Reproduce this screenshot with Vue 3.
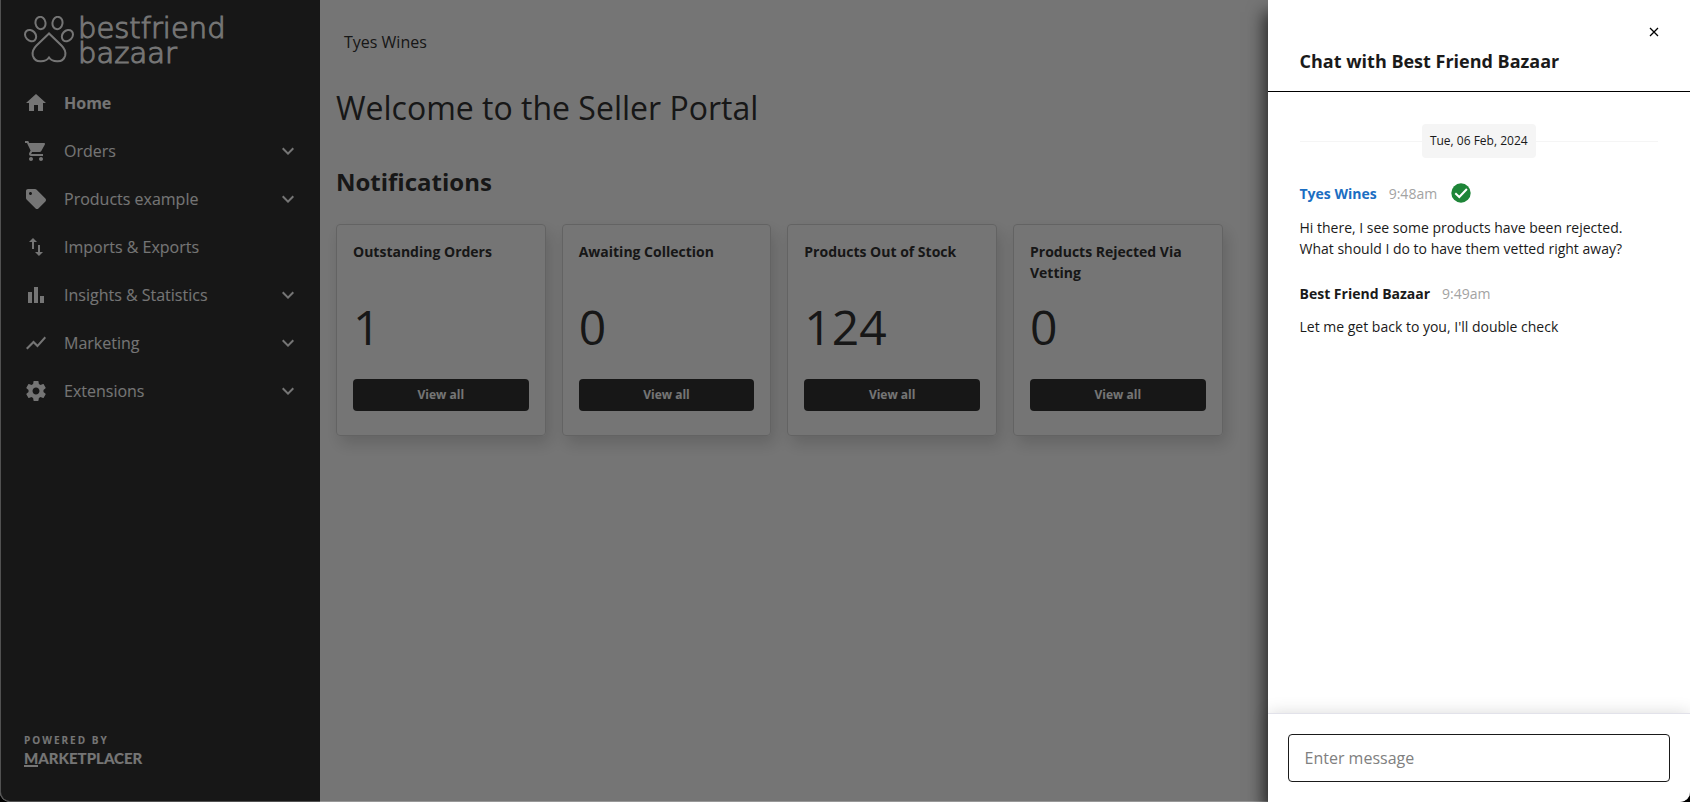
<template>
  <div class="window">
    <div class="portal">
      <!-- Sidebar -->
      <aside class="sidebar">
        <a class="brand" href="#" aria-label="bestfriend bazaar">
          <svg class="brand-paw" viewBox="0 0 50 47" aria-hidden="true">
            <ellipse cx="16.5" cy="7" rx="5" ry="6.2" transform="rotate(-10 16.5 7)" />
            <ellipse cx="33.5" cy="7" rx="5" ry="6.2" transform="rotate(10 33.5 7)" />
            <ellipse cx="6.6" cy="19.6" rx="5" ry="6.2" transform="rotate(-42 6.6 19.6)" />
            <ellipse cx="43.4" cy="19.6" rx="5" ry="6.2" transform="rotate(42 43.4 19.6)" />
            <path d="M25 17.5L12.5 29.5C9 33 8 36 8.8 39.5C10 44 13.5 45.5 17 45.3C20 45.2 23 44.5 25 41.5C27 44.5 30 45.2 33 45.3C36.5 45.5 40 44 41.2 39.5C42 36 41 33 37.5 29.5Z" />
          </svg>
          <span class="brand-name">
            <span>bestfriend</span>
            <span>bazaar</span>
          </span>
        </a>

        <nav class="menu">
          <a
            v-for="item in menu"
            :key="item.label"
            href="#"
            class="menu-item"
            :class="{ active: item.active }"
          >
            <svg class="icon" viewBox="0 0 24 24" aria-hidden="true"><path :d="item.icon" /></svg>
            <span class="menu-label">{{ item.label }}</span>
            <svg v-if="item.children" class="icon" viewBox="0 0 24 24" aria-hidden="true">
              <path d="M16.59 8.59L12 13.17 7.41 8.59 6 10l6 6 6-6z" />
            </svg>
          </a>
        </nav>

        <div class="powered">
          <span class="powered-by">POWERED BY</span>
          <span class="powered-name"><span class="powered-m">M</span>ARKETPLACER</span>
        </div>
      </aside>

      <!-- Main content -->
      <main class="main">
        <div class="seller">Tyes Wines</div>
        <h1>Welcome to the Seller Portal</h1>
        <h2>Notifications</h2>
        <div class="cards">
          <section v-for="card in cards" :key="card.title" class="card">
            <h3>{{ card.title }}</h3>
            <div class="count">{{ card.count }}</div>
            <button type="button" class="view-all">View all</button>
          </section>
        </div>
      </main>
    </div>

    <div class="backdrop"></div>

    <!-- Chat drawer -->
    <aside class="drawer">
      <header class="drawer-header">
        <button type="button" class="close" aria-label="Close" @click="draft = ''">
          <svg viewBox="0 0 10 10" aria-hidden="true"><path d="M1 1l8 8M9 1l-8 8" /></svg>
        </button>
        <h2>Chat with Best Friend Bazaar</h2>
      </header>

      <div class="thread">
        <div class="day"><span>Tue, 06 Feb, 2024</span></div>
        <article v-for="msg in messages" :key="msg.time" class="message">
          <div class="meta">
            <span class="author" :class="{ own: msg.own }">{{ msg.author }}</span>
            <time>{{ msg.time }}</time>
            <svg v-if="msg.own" class="sent" viewBox="0 0 24 24" aria-hidden="true">
              <circle cx="12" cy="12" r="9.7" />
              <path d="M6.3 12.2l4 3.8 7.6-8" />
            </svg>
          </div>
          <p>{{ msg.text }}</p>
        </article>
      </div>

      <form class="composer" @submit.prevent>
        <input v-model="draft" type="text" placeholder="Enter message" aria-label="Enter message" />
      </form>
    </aside>
  </div>
</template>

<script setup>
import { ref } from "vue"

const draft = ref("")

const menu = [
  { label: "Home", active: true, icon: "M10 20v-6h4v6h5v-8h3L12 3 2 12h3v8z" },
  {
    label: "Orders",
    children: true,
    icon: "M7 18c-1.1 0-1.99.9-1.99 2S5.9 22 7 22s2-.9 2-2-.9-2-2-2zM1 2v2h2l3.6 7.59-1.35 2.45c-.16.28-.25.61-.25.96 0 1.1.9 2 2 2h12v-2H7.42c-.14 0-.25-.11-.25-.25l.03-.12.9-1.63h7.45c.75 0 1.41-.41 1.75-1.03l3.58-6.49c.08-.14.12-.31.12-.48 0-.55-.45-1-1-1H5.21l-.94-2H1zm16 16c-1.1 0-1.99.9-1.99 2s.89 2 1.99 2 2-.9 2-2-.9-2-2-2z"
  },
  {
    label: "Products example",
    children: true,
    icon: "M21.41 11.58l-9-9C12.05 2.22 11.55 2 11 2H4c-1.1 0-2 .9-2 2v7c0 .55.22 1.05.59 1.42l9 9c.36.36.86.58 1.41.58.55 0 1.05-.22 1.41-.59l7-7c.37-.36.59-.86.59-1.41 0-.55-.23-1.06-.59-1.42zM6.5 8C5.67 8 5 7.33 5 6.5S5.67 5 6.5 5 8 5.67 8 6.5 7.33 8 6.5 8z"
  },
  {
    label: "Imports & Exports",
    icon: "M16 17.01V10h-2v7.01h-3L15 21l4-3.99h-3zM9 3L5 6.99h3V14h2V6.99h3L9 3z"
  },
  { label: "Insights & Statistics", children: true, icon: "M4 9h4v11H4zM10 4h4v16h-4zM16 13h4v7h-4z" },
  {
    label: "Marketing",
    children: true,
    icon: "M3.5 18.49l6-6.01 4 4L22 6.92l-1.41-1.41-7.09 7.97-4-4L2 16.99z"
  },
  {
    label: "Extensions",
    children: true,
    icon: "M19.43 12.98c.04-.32.07-.64.07-.98s-.03-.66-.07-.98l2.11-1.65c.19-.15.24-.42.12-.64l-2-3.46c-.12-.22-.39-.3-.61-.22l-2.49 1c-.52-.4-1.08-.73-1.69-.98l-.38-2.65C14.46 2.18 14.25 2 14 2h-4c-.25 0-.46.18-.49.42l-.38 2.65c-.61.25-1.17.59-1.69.98l-2.49-1c-.23-.09-.49 0-.61.22l-2 3.46c-.13.22-.07.49.12.64l2.11 1.65c-.04.32-.07.65-.07.98s.03.66.07.98l-2.11 1.65c-.19.15-.24.42-.12.64l2 3.46c.12.22.39.3.61.22l2.49-1c.52.4 1.08.73 1.69.98l.38 2.65c.03.24.24.42.49.42h4c.25 0 .46-.18.49-.42l.38-2.65c.61-.25 1.17-.59 1.69-.98l2.49 1c.23.09.49 0 .61-.22l2-3.46c.12-.22.07-.49-.12-.64l-2.11-1.65zM12 15.5c-1.93 0-3.5-1.57-3.5-3.5s1.57-3.5 3.5-3.5 3.5 1.57 3.5 3.5-1.57 3.5-3.5 3.5z"
  }
]

const cards = [
  { title: "Outstanding Orders", count: 1 },
  { title: "Awaiting Collection", count: 0 },
  { title: "Products Out of Stock", count: 124 },
  { title: "Products Rejected Via Vetting", count: 0 }
]

const messages = [
  {
    author: "Tyes Wines",
    time: "9:48am",
    own: true,
    text: "Hi there, I see some products have been rejected. What should I do to have them vetted right away?"
  },
  {
    author: "Best Friend Bazaar",
    time: "9:49am",
    own: false,
    text: "Let me get back to you, I'll double check"
  }
]
</script>

<style>
body {
  background: #000;
}
</style>

<style scoped>
* {
  box-sizing: border-box;
}

.window {
  position: relative;
  height: 100vh;
  overflow: hidden;
  border-radius: 0 0 10px 10px;
  background: #fff;
  color: #333;
  font-family: "Open Sans", "Noto Sans", sans-serif;
  font-size: 16px;
}

.portal {
  display: flex;
  height: 100%;
}

/* Sidebar */
.sidebar {
  display: flex;
  flex-direction: column;
  flex: none;
  width: 320px;
  padding: 16px 20px 34px 24px;
  background: #333;
  color: #fff;
}

.brand {
  display: flex;
  gap: 4px;
  height: 47px;
  color: inherit;
  text-decoration: none;
}

.brand-paw {
  width: 50px;
  height: 47px;
  fill: none;
  stroke: currentColor;
  stroke-width: 2;
}

.brand-name {
  display: flex;
  flex-direction: column;
  font-family: "DejaVu Sans Light", "DejaVu Sans", sans-serif;
  font-size: 29px;
  font-weight: 200;
  line-height: 25px;
  -webkit-text-stroke: 1px currentColor;
}

.menu {
  display: flex;
  flex-direction: column;
  flex: 1;
  margin-top: 16px;
}

.menu-item {
  display: flex;
  align-items: center;
  gap: 16px;
  height: 48px;
  color: inherit;
  text-decoration: none;
}

.menu-item.active {
  font-weight: 700;
}

.menu-label {
  flex: 1;
}

.icon {
  flex: none;
  width: 24px;
  height: 24px;
  fill: currentColor;
}

.powered {
  display: flex;
  flex-direction: column;
  gap: 1px;
}

.powered-by {
  font-size: 10px;
  font-weight: 700;
  line-height: 14px;
  letter-spacing: 2px;
}

.powered-name {
  font-family: Lato, sans-serif;
  font-size: 15px;
  font-weight: 900;
  line-height: 20px;
}

.powered-m {
  display: inline-block;
  border-bottom: 2px solid currentColor;
  line-height: 14px;
}

/* Main content */
.main {
  flex: 1;
  padding: 16px;
}

.seller {
  padding: 16px 8px;
  line-height: 20px;
}

h1 {
  margin: 18px 0 0;
  font-size: 32px;
  font-weight: 400;
  line-height: 44px;
}

.main h2 {
  margin: 34px 0 24px;
  font-size: 24px;
  font-weight: 700;
  line-height: 36px;
}

.cards {
  display: grid;
  grid-template-columns: repeat(6, 1fr);
  gap: 16px;
}

.card {
  display: flex;
  flex-direction: column;
  padding: 16px 16px 24px;
  border: 1px solid #d8d8d8;
  border-radius: 4px;
  box-shadow: 4px 8px 16px rgba(0, 0, 0, 0.15);
}

.card h3 {
  min-height: 42px;
  margin: 0 0 12px;
  font-size: 14px;
  font-weight: 700;
  line-height: 21px;
}

.count {
  margin-bottom: 20px;
  font-size: 48px;
  line-height: 64px;
}

.view-all {
  height: 32px;
  padding: 0 8px 2px;
  border: 0;
  border-radius: 4px;
  background: #333;
  color: #fff;
  font: 700 12px "Open Sans", "Noto Sans", sans-serif;
}

.backdrop {
  position: absolute;
  inset: 0;
  border: solid rgba(255, 255, 255, 0.25);
  border-width: 0 0 1px 1px;
  border-radius: 0 0 10px 10px;
  background: rgba(0, 0, 0, 0.54);
}

/* Chat drawer */
.drawer {
  position: absolute;
  inset: 0 0 0 auto;
  display: flex;
  flex-direction: column;
  width: 25%;
  background: #fff;
  box-shadow: -4px 12px 16px rgba(0, 0, 0, 0.65);
  color: #1a1a1a;
}

.drawer-header {
  display: flex;
  flex-direction: column;
  padding: 24px 28px 16px 32px;
  border-bottom: 1px solid #000;
}

.close {
  display: grid;
  place-items: center;
  align-self: flex-end;
  width: 16px;
  height: 16px;
  padding: 0;
  border: 0;
  background: none;
}

.close svg {
  width: 10px;
  height: 10px;
  fill: none;
  stroke: #000;
  stroke-width: 1.3;
}

.drawer-header h2 {
  margin: 8px 0 0;
  font-size: 18px;
  font-weight: 700;
  line-height: 27px;
}

.thread {
  flex: 1;
  padding: 32px;
  font-size: 14px;
  line-height: 21px;
}

.day {
  display: flex;
  align-items: center;
  margin-bottom: 23px;
  font-size: 12px;
}

.day::before,
.day::after {
  content: "";
  flex: 1;
  height: 1px;
  background: #f5f5f5;
}

.day span {
  padding: 6px 8px;
  border-radius: 4px;
  background: #f5f5f5;
  line-height: 22px;
}

.message {
  margin-bottom: 24px;
}

.meta {
  display: flex;
  align-items: center;
  gap: 12px;
}

.author {
  font-weight: 700;
}

.author.own {
  color: #1b6ec2;
}

time {
  color: #a3a3a3;
}

.sent {
  width: 24px;
  height: 24px;
  fill: #1e8538;
}

.sent path {
  fill: none;
  stroke: #fff;
  stroke-width: 2;
}

.message p {
  margin: 12px 0 0;
}

.composer {
  padding: 20px;
  border-top: 1px solid #e2e2ea;
  box-shadow: 0 0 16px rgba(0, 0, 0, 0.15);
}

.composer input {
  display: block;
  width: 100%;
  height: 48px;
  padding: 0 16px;
  border: 1px solid #1a1a1a;
  border-radius: 4px;
  background: #fff;
  font: 16px "Open Sans", "Noto Sans", sans-serif;
}

.composer input::placeholder {
  color: #808080;
}
</style>
